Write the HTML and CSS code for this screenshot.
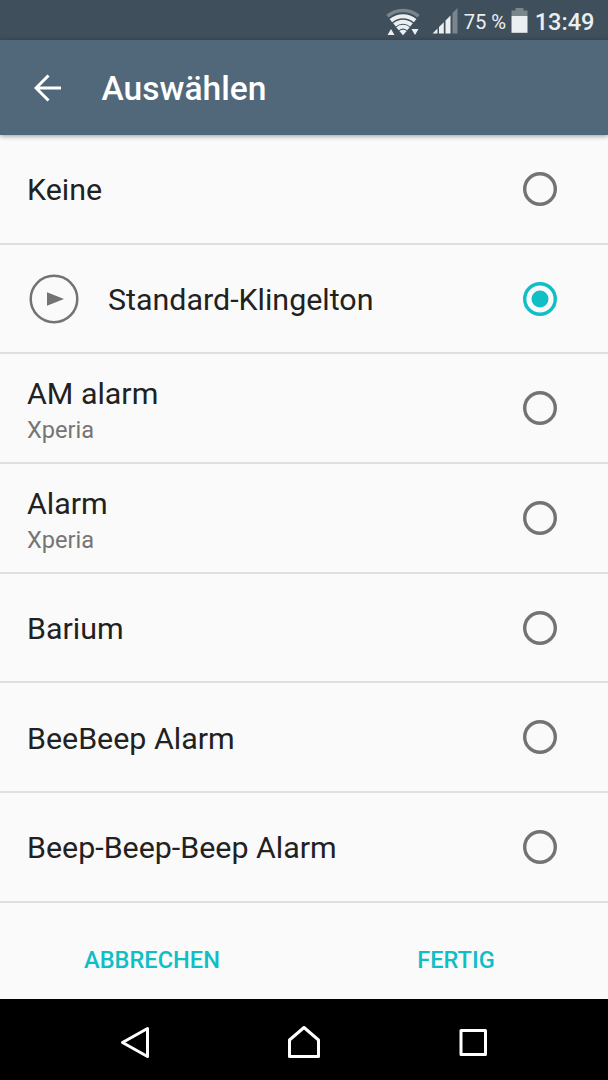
FILE: index.html
```html
<!DOCTYPE html>
<html lang="de">
<head>
  <meta charset="UTF-8" />
  <title>Auswählen</title>
  <link rel="stylesheet" href="styles.css">
</head>
<body>
  <div class="statusbar">
    <svg class="wifi" width="34" height="28" viewBox="0 0 34 28">
      <path d="M1.400 8.200A24.500 24.500 0 0 1 32.600 8.200" fill="none" stroke="#7b858c" stroke-width="3.500" />
      <path d="M4.900 12.600A18.800 18.800 0 0 1 29.100 12.600M8.500 16.900A13.200 13.200 0 0 1 25.500 16.900M11.500 20.800A8.500 8.500 0 0 1 22.500 20.800" fill="none" stroke="#eceff1" stroke-width="4" />
      <path d="M13.300 23Q17 20.500 20.700 23L17 27.300ZM1.500 27L5 21 8.500 27ZM25.500 21H32.500L29 27Z" fill="#eceff1" />
    </svg>
    <svg class="signal" width="26" height="26" viewBox="0 0 26 26">
      <path d="M20.500 5L25.500 0V25.500H20.500Z" fill="#7b858c" />
      <path d="M0.500 25.500L5.500 20.500V25.500ZM7 19L11.800 14.200V25.500H7ZM13.500 12.500L18.500 7.500V25.500H13.500Z" fill="#eceff1" />
    </svg>
    <span class="percent">75 %</span>
    <svg class="battery" width="17" height="25" viewBox="0 0 17 25">
      <path d="M0.500 2.500H4.500V0H12.500V2.500H16.500V8H0.500Z" fill="#7b858c" />
      <path d="M0.500 8H16.500V24.800H0.500Z" fill="#eceff1" />
    </svg>
    <span class="clock">13:49</span>
  </div>

  <header class="toolbar">
    <svg class="back" width="28" height="28" viewBox="0 0 28 28">
      <path d="M27 14H2.500M14.500 1.500L2 14L14.500 26.500" fill="none" stroke="#fff" stroke-width="3" />
    </svg>
    <h1>Auswählen</h1>
  </header>

  <!-- radio button shapes shared by all rows -->
  <svg class="defs" width="0" height="0">
    <symbol id="radio-off" viewBox="0 0 34 34">
      <circle cx="17" cy="17" r="15.300" fill="none" stroke="currentColor" stroke-width="3.400" />
    </symbol>
    <symbol id="radio-on" viewBox="0 0 34 34">
      <circle cx="17" cy="17" r="15.300" fill="none" stroke="currentColor" stroke-width="3.400" />
      <circle cx="17" cy="17" r="8.500" fill="currentColor" />
    </symbol>
  </svg>

  <ul class="list">
    <li class="row">
      <div class="label">Keine</div>
      <svg class="radio"><use href="#radio-off" /></svg>
    </li>
    <li class="row">
      <svg class="play" width="50" height="50" viewBox="0 0 50 50">
        <circle cx="25" cy="25" r="23.300" fill="none" stroke="#737373" stroke-width="2.500" />
        <path d="M18 18.300L35 25L18 31.700Z" fill="#737373" />
      </svg>
      <div class="label">Standard-Klingelton</div>
      <svg class="radio checked"><use href="#radio-on" /></svg>
    </li>
    <li class="row">
      <div class="label two-line">AM alarm<small>Xperia</small></div>
      <svg class="radio"><use href="#radio-off" /></svg>
    </li>
    <li class="row">
      <div class="label two-line">Alarm<small>Xperia</small></div>
      <svg class="radio"><use href="#radio-off" /></svg>
    </li>
    <li class="row">
      <div class="label">Barium</div>
      <svg class="radio"><use href="#radio-off" /></svg>
    </li>
    <li class="row">
      <div class="label">BeeBeep Alarm</div>
      <svg class="radio"><use href="#radio-off" /></svg>
    </li>
    <li class="row">
      <div class="label">Beep-Beep-Beep Alarm</div>
      <svg class="radio"><use href="#radio-off" /></svg>
    </li>
  </ul>

  <div class="actions">
    <button type="button">ABBRECHEN</button>
    <button type="button">FERTIG</button>
  </div>

  <nav class="navbar">
    <svg width="34" height="36" viewBox="0 0 34 36">
      <path d="M29.500 3.500V31.500L4.500 17.500Z" fill="none" stroke="#fff" stroke-width="3" stroke-linejoin="round" />
    </svg>
    <svg width="34" height="36" viewBox="0 0 34 36">
      <path d="M17 2.500L31.500 15V31.500H2.500V15Z" fill="none" stroke="#fff" stroke-width="3" stroke-linejoin="round" />
    </svg>
    <svg width="34" height="36" viewBox="0 0 34 36">
      <path d="M5 5.500H29.500V29.500H5Z" fill="none" stroke="#fff" stroke-width="3" stroke-linejoin="round" />
    </svg>
  </nav>
</body>
</html>
```

FILE: styles.css
```css
* { box-sizing: border-box; }

body {
  margin: 0;
  height: 1080px;
  display: flex;
  flex-direction: column;
  overflow: hidden;
  font-family: Roboto, sans-serif;
  background: #fafafa;
  color: #212121;
}

svg { display: block; flex: none; }

.statusbar {
  height: 40px;
  flex: none;
  display: flex;
  align-items: center;
  justify-content: flex-end;
  padding: 3px 13.5px 0 0;
  background: #3f4f5c;
  color: #eceff1;
}

.wifi { margin: 1px 12px 0 0; }
.signal { margin: -1px 6px 0 0; }
.percent { font-size: 20.2px; margin-right: 5px; }
.battery { margin: -3px 6.5px 0 0; }
.clock { font-size: 23.6px; font-weight: 500; }

.toolbar {
  height: 95px;
  flex: none;
  display: flex;
  align-items: center;
  padding: 0 0 0 33.5px;
  background: #51687a;
  color: #fff;
  box-shadow: 0 1px 5px rgba(0,0,0,0.4);
  z-index: 1;
}

.toolbar h1 {
  margin: 2px 0 0 40px;
  font-size: 33.6px;
  font-weight: 500;
}

.list {
  margin: 0;
  padding: 0;
  list-style: none;
}

.row {
  height: 109.7px;
  display: flex;
  align-items: center;
  padding: 0 50.8px 0 27px;
  border-bottom: 2px solid #dfdfdf;
}

.play { margin: 0 29px 0 2px; }

.label {
  flex: 1;
  padding-top: 3px;
  font-size: 30.4px;
  line-height: 36px;
}

.label.two-line { padding-top: 8px; }

.label small {
  display: block;
  font-size: 23.6px;
  color: #757575;
}

.radio {
  width: 34px;
  height: 34px;
  color: #737373;
}

.radio.checked { color: #10bec6; }

.actions {
  flex: 1;
  display: grid;
  grid-template-columns: 1fr 1fr;
}

.actions button {
  border: none;
  padding: 18px 0 0;
  background: none;
  font: 500 23.6px Roboto, sans-serif;
  color: #10bec6;
}

.navbar {
  height: 81px;
  flex: none;
  display: flex;
  align-items: center;
  justify-content: center;
  gap: 135px;
  padding-top: 7px;
  background: #000;
}
```
